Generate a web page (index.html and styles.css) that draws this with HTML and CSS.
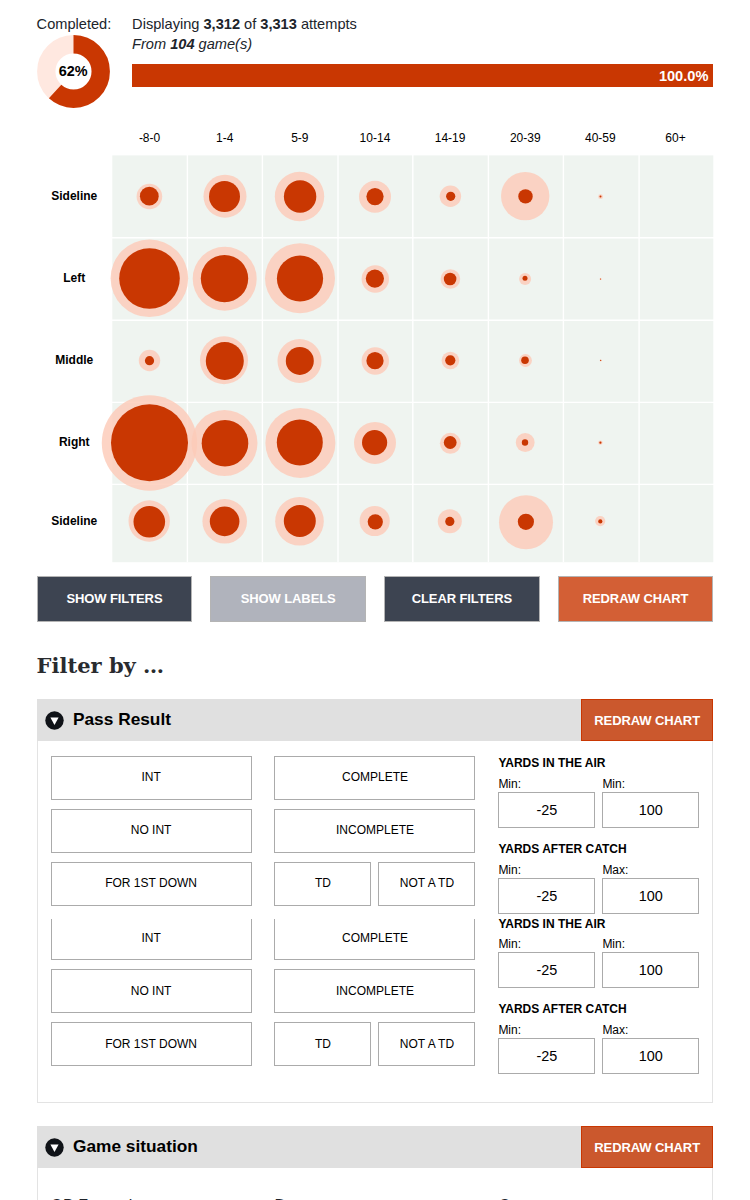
FILE: index.html
```html
<!DOCTYPE html>
<html lang="en">
<head>
<meta charset="utf-8">
<title>Pass attempts</title>
<link rel="stylesheet" href="styles.css">
</head>
<body>
<main class="page">
  <header class="summary">
    <div class="completed">
      <div>Completed:</div>
      <svg class="donut" width="73" height="73" viewBox="0 0 74 74">
        <circle cx="37" cy="37" r="27.6" fill="none" stroke="#ffe8e0" stroke-width="18.6"/>
        <circle cx="37" cy="37" r="27.6" fill="none" stroke="#c93702" stroke-width="18.6" pathLength="100" stroke-dasharray="61.8 100" transform="rotate(-90 37 37)"/>
        <text x="36.6" y="42" text-anchor="middle">62%</text>
      </svg>
    </div>
    <div class="totals">
      <div>Displaying <b>3,312</b> of <b>3,313</b> attempts</div>
      <div><i>From <b>104</b> game(s)</i></div>
      <div class="bar">100.0%</div>
    </div>
  </header>

  <section class="chart">
    <div class="cols"><span>-8-0</span><span>1-4</span><span>5-9</span><span>10-14</span><span>14-19</span><span>20-39</span><span>40-59</span><span>60+</span></div>
    <div class="rows"><span>Sideline</span><span>Left</span><span>Middle</span><span>Right</span><span>Sideline</span></div>
    <svg class="plot" width="602" height="407" viewBox="112 155 602 407">
      <rect x="112.3" y="155.4" width="601" height="406.8" fill="#eff4f0"/>
      <path class="lines" d="M187.4 155V562M262.4 155V562M338 155V562M412.8 155V562M488.4 155V562M563.4 155V562M639.1 155V562M112 237.8H714M112 320.2H714M112 402.4H714M112 484.4H714"/>
      <g class="halo">
        <circle cx="149.4" cy="196.5" r="12.8"/><circle cx="225" cy="196.2" r="21.5"/><circle cx="299.5" cy="196.5" r="24.7"/><circle cx="375" cy="196.7" r="16"/><circle cx="450.4" cy="196.2" r="10.7"/><circle cx="525.2" cy="196.1" r="24.2"/><circle cx="600.6" cy="196.7" r="2.4"/>
        <circle cx="149.4" cy="278.3" r="38.8"/><circle cx="224.7" cy="278.8" r="32"/><circle cx="300" cy="278.2" r="35"/><circle cx="375.3" cy="279" r="13.7"/><circle cx="450.4" cy="279" r="9.8"/><circle cx="525.1" cy="279" r="6"/><circle cx="600.7" cy="279" r="1"/>
        <circle cx="149.5" cy="360.5" r="10.7"/><circle cx="224" cy="360.2" r="24"/><circle cx="299.5" cy="361" r="22"/><circle cx="375.3" cy="361" r="13.7"/><circle cx="450.4" cy="360.5" r="8.8"/><circle cx="525.5" cy="360.5" r="6.4"/><circle cx="600.7" cy="360.4" r="1"/>
        <circle cx="149.5" cy="443" r="47.7"/><circle cx="224.5" cy="443" r="33"/><circle cx="300.4" cy="443" r="35"/><circle cx="375" cy="442.9" r="21"/><circle cx="450.4" cy="443.3" r="10.5"/><circle cx="525.2" cy="442.5" r="9.4"/><circle cx="600.4" cy="442.6" r="2.2"/>
        <circle cx="149.2" cy="521" r="20.7"/><circle cx="224.7" cy="521.3" r="22.3"/><circle cx="299.5" cy="521.3" r="24.3"/><circle cx="374.7" cy="521" r="15.1"/><circle cx="449.8" cy="521.3" r="12"/><circle cx="526" cy="522.2" r="27"/><circle cx="600.2" cy="521.1" r="5.1"/>
      </g>
      <g class="dot">
        <circle cx="149.3" cy="196.2" r="9.4"/><circle cx="224.5" cy="196.5" r="15.5"/><circle cx="300.1" cy="196.5" r="16.2"/><circle cx="375" cy="196.6" r="8.6"/><circle cx="450.7" cy="196.3" r="4.6"/><circle cx="525.5" cy="196.4" r="7.2"/><circle cx="600.5" cy="196.5" r="1"/>
        <circle cx="149.5" cy="278.5" r="30.3"/><circle cx="224.5" cy="278.6" r="23.7"/><circle cx="300" cy="278.5" r="23.1"/><circle cx="374.9" cy="278.6" r="9.1"/><circle cx="450.1" cy="279" r="6.3"/><circle cx="525" cy="278.3" r="2.5"/><circle cx="600.5" cy="279" r=".6"/>
        <circle cx="149.5" cy="360.7" r="4.6"/><circle cx="224.8" cy="361" r="19"/><circle cx="299.8" cy="360.9" r="14"/><circle cx="375" cy="360.7" r="8.6"/><circle cx="450.3" cy="360.3" r="5.1"/><circle cx="525" cy="360.3" r="3.8"/><circle cx="600.7" cy="360.4" r=".6"/>
        <circle cx="149.5" cy="442.7" r="38.5"/><circle cx="225" cy="443.2" r="23.3"/><circle cx="299.8" cy="442.4" r="23"/><circle cx="374.6" cy="442.6" r="12.6"/><circle cx="450.2" cy="442.5" r="6.4"/><circle cx="525" cy="442.5" r="3.2"/><circle cx="600.4" cy="442.7" r="1.1"/>
        <circle cx="149.3" cy="521.8" r="15.8"/><circle cx="224.6" cy="521.4" r="14.8"/><circle cx="299.8" cy="521" r="16"/><circle cx="375.3" cy="521.8" r="7.6"/><circle cx="449.8" cy="521.4" r="4.6"/><circle cx="525.9" cy="521.8" r="8.1"/><circle cx="600.3" cy="521.4" r="2.1"/>
      </g>
    </svg>
  </section>

  <nav class="actions">
    <button class="action">SHOW FILTERS</button>
    <button class="action muted">SHOW LABELS</button>
    <button class="action">CLEAR FILTERS</button>
    <button class="action hot">REDRAW CHART</button>
  </nav>

  <h2 class="heading">Filter by …</h2>

  <section class="panel">
    <div class="panel-head">
      <svg class="toggle" width="19" height="19" viewBox="0 0 19 19"><circle cx="9.5" cy="9.5" r="9.2" fill="#101318"/><path d="M5.4 6.6H13.6L9.5 13.9Z" fill="#fff"/></svg>
      <h3>Pass Result</h3>
      <button class="redraw">REDRAW CHART</button>
    </div>
    <div class="panel-body">
      <div class="group">
        <div class="filters">
          <div class="stack"><button>INT</button><button>NO INT</button><button>FOR 1ST DOWN</button></div>
          <div class="stack"><button>COMPLETE</button><button>INCOMPLETE</button><div class="pair"><button>TD</button><button>NOT A TD</button></div></div>
          <div class="ranges">
            <h4>YARDS IN THE AIR</h4>
            <div class="pair"><label>Min:<input value="-25"></label><label>Min:<input value="100"></label></div>
            <h4>YARDS AFTER CATCH</h4>
            <div class="pair"><label>Min:<input value="-25"></label><label>Max:<input value="100"></label></div>
          </div>
        </div>
      </div>
      <div class="group clipped">
        <div class="filters">
          <div class="stack"><button>INT</button><button>NO INT</button><button>FOR 1ST DOWN</button></div>
          <div class="stack"><button>COMPLETE</button><button>INCOMPLETE</button><div class="pair"><button>TD</button><button>NOT A TD</button></div></div>
          <div class="ranges">
            <h4>YARDS IN THE AIR</h4>
            <div class="pair"><label>Min:<input value="-25"></label><label>Min:<input value="100"></label></div>
            <h4>YARDS AFTER CATCH</h4>
            <div class="pair"><label>Min:<input value="-25"></label><label>Max:<input value="100"></label></div>
          </div>
        </div>
      </div>
    </div>
  </section>

  <section class="panel">
    <div class="panel-head">
      <svg class="toggle" width="19" height="19" viewBox="0 0 19 19"><circle cx="9.5" cy="9.5" r="9.2" fill="#101318"/><path d="M5.4 6.6H13.6L9.5 13.9Z" fill="#fff"/></svg>
      <h3>Game situation</h3>
      <button class="redraw">REDRAW CHART</button>
    </div>
    <div class="panel-body situation"><span>QB Formation</span><span>Down</span><span>Quarter</span></div>
  </section>
</main>
</body>
</html>
```
FILE: styles.css
```css
* { box-sizing: border-box; }
html { height: 1200px; overflow: hidden; }
body {
  margin: 0;
  height: 1200px;
  overflow: hidden;
  background: #fff;
  color: #20242b;
  font-family: "Liberation Sans", Arial, sans-serif;
}
button, input { font-family: inherit; margin: 0; padding: 0; border-radius: 0; }
.page { width: 676.8px; margin-left: 36.6px; padding-top: 14px; }

.summary { display: flex; height: 114px; font-size: 14.6px; line-height: 20px; }
.completed { width: 95.5px; }
.donut { display: block; margin-top: 1px; }
.donut text { font-size: 14.6px; font-weight: bold; fill: #000; }
.totals { flex: 1; }
.bar {
  height: 23px;
  margin-top: 10px;
  padding-right: 5px;
  background: #c93702;
  color: #fff;
  font-size: 14.6px;
  font-weight: bold;
  line-height: 24px;
  text-align: right;
}

.chart {
  display: grid;
  grid-template: 27px 407px / 75.4px 601.1px;
}
.cols { grid-column: 2; display: grid; grid-template-columns: repeat(8, 1fr); }
.cols span { text-align: center; font-size: 12px; line-height: 20px; color: #000; }
.rows { display: grid; grid-template-rows: 82px 82px 82px 82px 76px; }
.rows span { align-self: center; text-align: center; font-size: 12px; font-weight: bold; color: #000; }
.plot { display: block; overflow: visible; }
.lines { fill: none; stroke: #fff; stroke-width: 1.4; }
.halo { fill: #fccab8; fill-opacity: .82; }
.dot { fill: #c93702; }

.actions { display: flex; gap: 18px; margin-top: 14px; }
.action {
  flex: 1;
  height: 46px;
  padding-bottom: 1px;
  border: 1px solid #b4b4b4;
  background: #3d4451;
  color: #fff;
  font-size: 13px;
  font-weight: bold;
  letter-spacing: -.1px;
}
.muted { background: #b0b3bc; }
.hot { background: #d35f35; }

.heading {
  margin: 24px 0 14px;
  height: 39px;
  color: #292b2f;
  font: bold 21px/40px "DejaVu Serif", serif;
}

.panel { margin-bottom: 23px; border: 1px solid #e3e3e3; border-top: 0; }
.panel-head {
  display: flex;
  align-items: center;
  height: 42px;
  margin: 0 -1px;
  padding-left: 8px;
  background: #e0e0e0;
}
.panel-head h3 { flex: 1; margin: 0 0 2px 9.4px; font-size: 17.3px; color: #000; }
.redraw {
  width: 132.5px;
  height: 42px;
  border: 1px solid #c93702;
  background: #cb582d;
  color: #fff;
  font-size: 13px;
  font-weight: bold;
  letter-spacing: -.1px;
}
.panel-body { height: 361px; padding: 15px 13px 0; }
.group { height: 163px; }
.clipped { overflow: hidden; }
.clipped .stack { margin-top: -3px; }
.clipped .ranges { margin-top: -2px; }
.filters { display: grid; grid-template-columns: repeat(3, 201px); justify-content: space-between; }
.stack { display: flex; flex-direction: column; gap: 9px; }
.stack button {
  height: 44px;
  padding-bottom: 2px;
  border: 1px solid #ababab;
  background: #fff;
  color: #000;
  font-size: 12px;
}
.clipped .stack button { padding-bottom: 0; }
.pair { display: grid; grid-template-columns: 1fr 1fr; gap: 7px; }
.ranges h4 { margin: 0 0 7px; font-size: 12px; line-height: 14px; color: #000; }
.clipped .ranges h4:first-child { margin-bottom: 6px; }
.ranges h4 + .pair { margin-bottom: 14px; }
.ranges label { font-size: 12px; line-height: 15px; color: #000; }
.ranges input {
  display: block;
  width: 100%;
  height: 36px;
  border: 1px solid #ababab;
  background: #fff;
  color: #000;
  font-size: 14.4px;
  text-align: center;
}
.situation {
  display: grid;
  grid-template-columns: 201px 201px 201px;
  justify-content: space-between;
  padding-top: 28px;
  font-size: 16px;
  line-height: 20px;
}
```
